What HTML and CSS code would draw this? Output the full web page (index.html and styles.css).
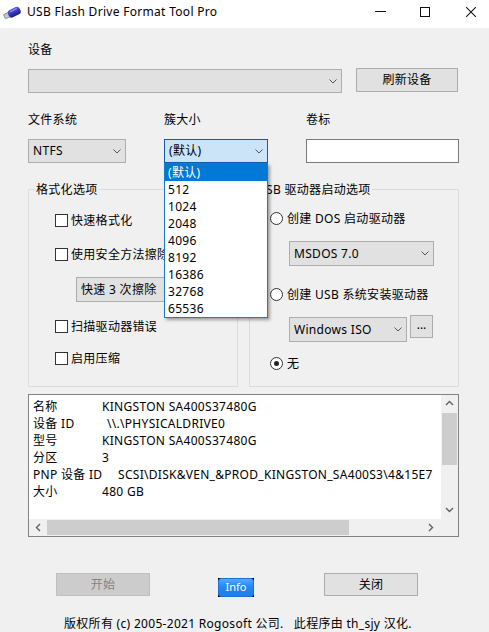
FILE: index.html
```html
<!DOCTYPE html>
<html lang="zh-CN">
<head>
<meta charset="utf-8">
<title>USB Flash Drive Format Tool Pro</title>
<link rel="stylesheet" href="styles.css">
</head>
<body>
<div class="win">
  <header class="titlebar">
    <svg class="app-icon" width="18" height="14" viewBox="0 0 18 14">
      <defs>
        <linearGradient id="ub" x1="0" y1="0" x2="0" y2="1">
          <stop offset="0" stop-color="#5c5ce6"/>
          <stop offset="1" stop-color="#18188a"/>
        </linearGradient>
      </defs>
      <g transform="rotate(-25 9 7)">
        <rect x="0.5" y="4.8" width="5.5" height="4.8" rx="0.6" fill="#c0c6cc" stroke="#6a7078" stroke-width="0.6"/>
        <rect x="5" y="3.2" width="12.8" height="8" rx="3" fill="url(#ub)"/>
        <rect x="7.5" y="4.3" width="8" height="1.4" rx="0.7" fill="#9a9af2" opacity="0.8"/>
      </g>
    </svg>
    <span class="title">USB Flash Drive Format Tool Pro</span>
    <div class="caption">
      <svg class="cap-min" width="11" height="1" viewBox="0 0 11 1"><rect width="11" height="1" fill="#111"/></svg>
      <svg class="cap-max" width="10" height="10" viewBox="0 0 10 10"><rect x="0.5" y="0.5" width="9" height="9" fill="none" stroke="#111"/></svg>
      <svg class="cap-close" width="10" height="10" viewBox="0 0 10 10"><path d="M0 0L10 10M10 0L0 10" stroke="#111" stroke-width="1.05"/></svg>
    </div>
  </header>

  <main class="client">
    <div class="lbl dev-lbl">设备</div>
    <div class="dev-row">
      <div class="combo dev-combo">
        <span class="val"></span>
        <svg class="chev" width="8" height="5" viewBox="0 0 8 5"><path d="M0.5 0.5L4 4L7.5 0.5" fill="none" stroke="#555" stroke-width="1"/></svg>
      </div>
      <div class="btn refresh">刷新设备</div>
    </div>

    <div class="cols labels">
      <span class="lbl">文件系统</span>
      <span class="lbl">簇大小</span>
      <span class="lbl">卷标</span>
    </div>
    <div class="cols fields">
      <div class="combo">
        <span class="val">NTFS</span>
        <svg class="chev" width="8" height="5" viewBox="0 0 8 5"><path d="M0.5 0.5L4 4L7.5 0.5" fill="none" stroke="#555" stroke-width="1"/></svg>
      </div>
      <div class="cluster-wrap">
        <div class="combo open">
          <span class="val">(默认)</span>
          <svg class="chev" width="8" height="5" viewBox="0 0 8 5"><path d="M0.5 0.5L4 4L7.5 0.5" fill="none" stroke="#555" stroke-width="1"/></svg>
        </div>
        <ul class="droplist">
          <li class="sel">(默认)</li>
          <li>512</li>
          <li>1024</li>
          <li>2048</li>
          <li>4096</li>
          <li>8192</li>
          <li>16386</li>
          <li>32768</li>
          <li>65536</li>
        </ul>
      </div>
      <div class="textbox"></div>
    </div>

    <div class="groups">
      <fieldset class="group">
        <legend>格式化选项</legend>
        <div class="gbody gleft">
          <div class="chk cb1"><span class="box"></span><span class="txt">快速格式化</span></div>
          <div class="chk cb2"><span class="box"></span><span class="txt">使用安全方法擦除</span></div>
          <div class="combo gcombo wipe">
            <span class="val">快速 3 次擦除</span>
          </div>
          <div class="chk cb3"><span class="box"></span><span class="txt">扫描驱动器错误</span></div>
          <div class="chk cb4"><span class="box"></span><span class="txt">启用压缩</span></div>
        </div>
      </fieldset>
      <fieldset class="group">
        <legend>USB 驱动器启动选项</legend>
        <div class="gbody gright">
          <div class="chk r1"><span class="radio"></span><span class="txt">创建 DOS 启动驱动器</span></div>
          <div class="combo gcombo msdos">
            <span class="val">MSDOS 7.0</span>
            <svg class="chev" width="8" height="5" viewBox="0 0 8 5"><path d="M0.5 0.5L4 4L7.5 0.5" fill="none" stroke="#555" stroke-width="1"/></svg>
          </div>
          <div class="chk r2"><span class="radio"></span><span class="txt">创建 USB 系统安装驱动器</span></div>
          <div class="iso-row">
            <div class="combo gcombo iso">
              <span class="val">Windows ISO</span>
              <svg class="chev" width="8" height="5" viewBox="0 0 8 5"><path d="M0.5 0.5L4 4L7.5 0.5" fill="none" stroke="#555" stroke-width="1"/></svg>
            </div>
            <div class="btn dots">...</div>
          </div>
          <div class="chk r3"><span class="radio on"></span><span class="txt">无</span></div>
        </div>
      </fieldset>
    </div>

    <div class="infobox">
      <div class="info-text">
        <div class="irow"><span class="k">名称</span><span class="v">KINGSTON SA400S37480G</span></div>
        <div class="irow"><span class="k">设备 ID</span><span class="v indent">\\.\PHYSICALDRIVE0</span></div>
        <div class="irow"><span class="k">型号</span><span class="v">KINGSTON SA400S37480G</span></div>
        <div class="irow"><span class="k">分区</span><span class="v">3</span></div>
        <div class="irow"><span class="k wide">PNP 设备 ID</span><span class="v">SCSI\DISK&amp;VEN_&amp;PROD_KINGSTON_SA400S3\4&amp;15E7</span></div>
        <div class="irow"><span class="k">大小</span><span class="v">480 GB</span></div>
      </div>
      <div class="vscroll">
        <svg class="arr" width="9" height="6" viewBox="0 0 9 6"><path d="M1 5L4.5 1.5L8 5" fill="none" stroke="#606060" stroke-width="1.4"/></svg>
        <div class="vthumb"></div>
        <svg class="arr down" width="9" height="6" viewBox="0 0 9 6"><path d="M1 1L4.5 4.5L8 1" fill="none" stroke="#606060" stroke-width="1.4"/></svg>
      </div>
      <div class="hscroll">
        <svg class="arr" width="6" height="9" viewBox="0 0 6 9"><path d="M5 1L1.5 4.5L5 8" fill="none" stroke="#606060" stroke-width="1.4"/></svg>
        <div class="hthumb"></div>
        <svg class="arr right" width="6" height="9" viewBox="0 0 6 9"><path d="M1 1L4.5 4.5L1 8" fill="none" stroke="#606060" stroke-width="1.4"/></svg>
      </div>
      <div class="corner"></div>
    </div>

    <div class="actions">
      <div class="btn disabled start">开始</div>
      <div class="info-wrap"><div class="info-btn">Info</div></div>
      <div class="btn close">关闭</div>
    </div>

    <p class="copyright">版权所有 (c) 2005-2021 Rogosoft 公司.   此程序由 th_sjy 汉化.</p>
  </main>
</div>
</body>
</html>
```

FILE: styles.css
```css
* { box-sizing: border-box; }
html, body { margin: 0; padding: 0; }
body {
  width: 489px;
  height: 632px;
  overflow: hidden;
  background: #f0f0f0;
  color: #000;
  font-family: "Noto Sans", "Noto Sans CJK SC", sans-serif;
  font-size: 12px;
  letter-spacing: 0.3px;
}
.win { width: 489px; height: 632px; display: flex; flex-direction: column; }

/* title bar */
.titlebar {
  height: 28px;
  flex: none;
  background: #fff;
  display: flex;
  align-items: flex-start;
  padding-top: 4px;
}
.app-icon { margin: 2px 6px 0 3px; flex: none; }
.title { line-height: 16px; }
.caption { margin-left: auto; display: flex; align-items: flex-start; padding-right: 13px; }
.cap-min { margin-top: 7px; }
.cap-max { margin-top: 3px; margin-left: 34px; }
.cap-close { margin-top: 3px; margin-left: 36px; }

/* client area */
.client { padding: 0 30px 0 28px; flex: 1; }
.lbl { line-height: 16px; display: block; }
.dev-lbl { margin-top: 14px; }

.dev-row { margin-top: 10px; display: flex; align-items: flex-start; gap: 14px; }

.combo {
  display: flex;
  align-items: center;
  height: 24px;
  background: #e1e1e1;
  border: 1px solid #adadad;
  padding-left: 4px;
  padding-right: 4px;
  line-height: 16px;
  white-space: nowrap;
}
.combo .chev { margin-left: auto; flex: none; }
.dev-combo { width: 314px; margin-top: 1px; }

.btn {
  display: flex;
  align-items: center;
  justify-content: center;
  background: #e1e1e1;
  border: 1px solid #adadad;
  line-height: 16px;
}
.refresh { width: 102px; height: 24px; }

.cols { display: grid; grid-template-columns: 98px 104px 153px; column-gap: 38px; }
.labels { margin-top: 19px; }
.fields { margin-top: 11px; }

.cluster-wrap { position: relative; }
.combo.open { background: #cce4f7; border-color: #0b5fb0; }
.textbox { height: 24px; background: #fff; border: 1px solid #7a7a7a; }

.droplist {
  position: absolute;
  left: 0;
  top: 100%;
  width: 104px;
  margin: 0;
  padding: 0;
  list-style: none;
  background: #fff;
  border: 1px solid #1979ca;
  box-shadow: 2px 2px 3px rgba(0, 0, 0, 0.35);
  z-index: 10;
}
.droplist li { height: 17px; line-height: 17px; padding-left: 3px; }
.droplist li.sel { background: #0078d7; color: #fff; }

/* group boxes */
.groups { margin-top: 18px; display: flex; gap: 11px; }
.group {
  width: 210px;
  height: 206px;
  margin: 0;
  padding: 0;
  border: 1px solid #dcdcdc;
  min-width: 0;
}
.group legend { margin-left: 6px; padding: 0 1px; line-height: 17px; }
.gleft { padding-left: 26px; }
.gright { padding-left: 20px; }

.chk { display: flex; align-items: center; height: 13px; gap: 3px; white-space: nowrap; }
.chk .txt { line-height: 13px; }
.box { width: 13px; height: 13px; flex: none; border: 1px solid #333; background: #fff; }
.radio {
  width: 13px; height: 13px; flex: none;
  border: 1px solid #333; border-radius: 50%; background: #fff;
  display: flex; align-items: center; justify-content: center;
  margin-right: 1px;
}
.radio.on::after { content: ""; width: 5px; height: 5px; border-radius: 50%; background: #222; }

.cb1 { margin-top: 16px; }
.cb2 { margin-top: 21px; }
.gcombo { height: 25px; }
.wipe { margin-top: 16px; margin-left: 21px; width: 150px; }
.cb3 { margin-top: 18px; }
.cb4 { margin-top: 19px; }

.r1 { margin-top: 14px; }
.msdos { margin-top: 16px; margin-left: 19px; width: 145px; }
.r2 { margin-top: 22px; }
.iso-row { margin-top: 14px; margin-left: 19px; display: flex; align-items: flex-start; gap: 3px; }
.iso { width: 118px; margin-top: 2px; }
.dots { width: 23px; height: 23px; line-height: 10px; padding-bottom: 4px; letter-spacing: 0; }
.r3 { margin-top: 15px; }

/* info box */
.infobox {
  margin-top: 7px;
  width: 431px;
  height: 143px;
  border: 1px solid #828282;
  display: grid;
  grid-template-columns: 412px 17px;
  grid-template-rows: 124px 17px;
  background: #f0f0f0;
}
.info-text { background: #fff; padding: 3px 0 0 4px; overflow: hidden; white-space: nowrap; }
.irow { display: flex; height: 17px; line-height: 17px; }
.k { width: 69px; flex: none; }
.k.wide { width: 85px; }
.v.indent { padding-left: 5px; }

.vscroll { display: flex; flex-direction: column; align-items: center; }
.vscroll .arr { margin-top: 5px; flex: none; }
.vthumb { width: 15px; height: 52px; margin-top: 7px; background: #cdcdcd; }
.vscroll .arr.down { margin-top: auto; margin-bottom: 6px; }

.hscroll { display: flex; align-items: center; }
.hscroll .arr { margin-left: 6px; flex: none; }
.hthumb { width: 302px; height: 15px; margin-left: 6px; background: #cdcdcd; }
.hscroll .arr.right { margin-left: auto; margin-right: 7px; }

/* bottom buttons */
.actions { margin-top: 36px; display: flex; align-items: flex-start; }
.start { width: 94px; height: 23px; margin-left: 28px; }
.btn.disabled { background: #cccccc; border-color: #bfbfbf; color: #838383; }
.info-wrap { width: 36px; height: 19px; margin-top: 5px; margin-left: 68px; background: #000; }
.info-btn {
  width: 36px; height: 19px;
  border-radius: 3px;
  border: 1px solid #1c6fd6;
  background: linear-gradient(#56a9ff, #2487f2 45%, #1c7deb);
  color: #fff;
  font-size: 11px;
  line-height: 16px;
  text-align: center;
  letter-spacing: 0;
}
.close { width: 94px; height: 23px; margin-left: 70px; }

.copyright { margin: 19px 0 0 36px; line-height: 16px; white-space: pre; }
```
